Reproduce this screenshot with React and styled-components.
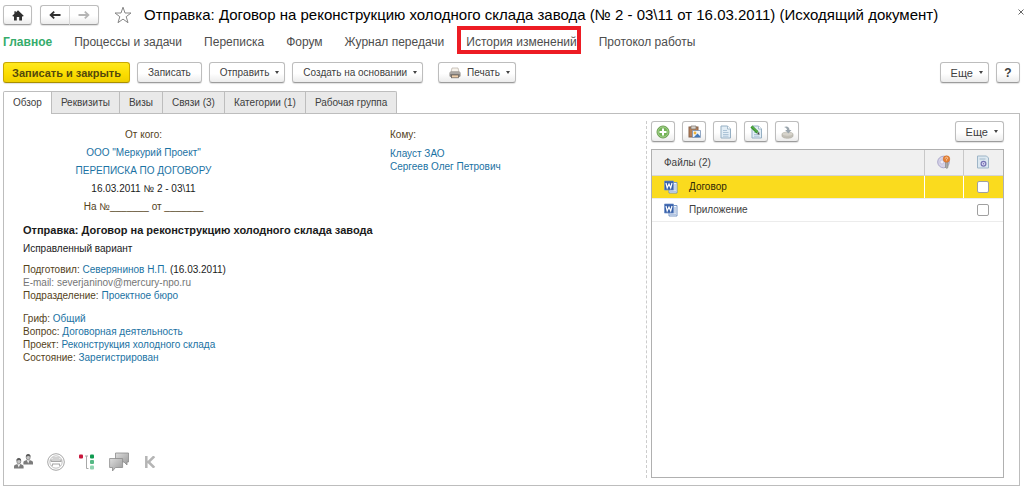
import React from 'react';
import styled, { createGlobalStyle } from 'styled-components';

const GlobalStyle = createGlobalStyle`
  * {
    box-sizing: border-box;
  }

  body {
    margin: 0;
    background: #fff;
    font-family: 'Liberation Sans', Arial, sans-serif;
    font-size: 10px;
    color: #404040;
  }
`;

const Page = styled.div`
  display: flex;
  flex-direction: column;
  min-height: 100vh;
  padding: 5px 4px 6px 3px;
`;

const TitleBar = styled.header`
  display: flex;
  align-items: center;
  height: 20px;
`;

const Button = styled.button`
  display: inline-flex;
  align-items: center;
  justify-content: center;
  gap: 6px;
  height: ${props => props.$height || 21}px;
  width: ${props => (props.$width ? `${props.$width}px` : 'auto')};
  padding: ${props => (props.$width ? '0' : '0 10px')};
  border: 1px solid #bdbdbd;
  border-bottom-color: #9c9c9c;
  border-radius: 3px;
  background: linear-gradient(#fff, #fff 55%, #ececec);
  box-shadow: 0 1px 1px rgba(0, 0, 0, 0.12);
  font-family: inherit;
  font-size: ${props => (props.$large ? 11 : 10)}px;
  color: #404040;
  white-space: nowrap;
`;

const PrimaryButton = styled(Button)`
  padding: 0 8px;
  border-color: #c9a800;
  border-bottom-color: #a98f00;
  background: linear-gradient(#ffe91f, #fbdc00 60%, #efd000);
  font-size: 11px;
  font-weight: bold;
  color: #54490c;
`;

const MenuButton = styled(Button)`
  padding: 0 5px 0 10px;

  &::after {
    content: '';
    border: 2px solid transparent;
    border-top: 3px solid #444;
    border-bottom: 0;
  }
`;

const HelpButton = styled(Button)`
  font-size: 12px;
  font-weight: bold;
`;

const HistoryGroup = styled.div`
  display: flex;
  margin: 0 15px 0 8px;

  button:first-child {
    border-right-color: #d9d9d9;
    border-radius: 3px 0 0 3px;
  }

  button:last-child {
    border-left: 0;
    border-radius: 0 3px 3px 0;
  }
`;

const StarButton = styled.button`
  display: flex;
  padding: 0;
  border: 0;
  background: none;
`;

const Title = styled.h1`
  flex: 1;
  margin: 0 0 0 12px;
  font-size: 15px;
  font-weight: normal;
  line-height: 20px;
  white-space: nowrap;
  color: #000;
`;

const CloseButton = styled.button`
  display: flex;
  align-self: flex-start;
  margin-right: -4px;
  padding: 4px 0;
  border: 0;
  background: none;
`;

const Nav = styled.nav`
  display: flex;
  gap: 22px;
  margin-top: 9px;
`;

const NavLink = styled.a`
  position: relative;
  font-size: 12px;
  line-height: 16px;
  font-weight: ${props => (props.$active ? 'bold' : 'normal')};
  color: ${props => (props.$active ? '#35ac6b' : '#4d4d4d')};
  text-decoration: none;
  white-space: nowrap;
`;

const MarkedLink = styled(NavLink)`
  &::after {
    content: '';
    position: absolute;
    inset: -8px -4px -4px -9px;
    border: 4px solid #ed1c24;
  }
`;

const CommandBar = styled.div`
  display: flex;
  gap: 7px;
  margin-top: 12px;
`;

const Spacer = styled.div`
  flex: ${props => (props.$width ? `0 0 ${props.$width}px` : '1')};
`;

const Tabs = styled.div`
  display: flex;
  margin-top: 8px;
`;

const Tab = styled.button`
  height: ${props => (props.$active ? 23 : 22)}px;
  margin-bottom: ${props => (props.$active ? '-1px' : '0')};
  padding: ${props => (props.$active ? '0 9px 1px' : '0 9px')};
  border: 1px solid #bdbdbd;
  border-left-width: ${props => (props.$active ? '1px' : '0')};
  border-bottom: 0;
  border-radius: ${props => (props.$active ? '2px 0 0 0' : '0')};
  background: ${props => (props.$active ? '#fff' : '#e9e9e9')};
  font-family: inherit;
  font-size: 10px;
  color: #404040;
  white-space: nowrap;
  z-index: ${props => (props.$active ? 1 : 0)};

  &:last-child {
    border-radius: 0 2px 0 0;
  }
`;

const Panel = styled.main`
  display: flex;
  flex: 1;
  border: 1px solid #bdbdbd;
  padding: 7px 15px 7px 0;
`;

const Overview = styled.section`
  display: flex;
  flex: 642;
  flex-direction: column;
  min-width: 0;
  border-right: 1px dashed #ccc;
`;

const Parties = styled.div`
  display: grid;
  grid-template-columns: 247px 1fr;
  column-gap: 123px;
  padding: 5px 0 0 16px;
  color: #54421a;
`;

const Sender = styled.div`
  text-align: center;
  line-height: 18px;
`;

const Recipient = styled.div`
  line-height: 13px;
`;

const RecipientLabel = styled.div`
  line-height: 18px;
  margin-bottom: 3px;
`;

const Dark = styled.span`
  color: #1a1a1a;
`;

const Muted = styled.span`
  color: #757575;
`;

const Link = styled.a`
  color: #1a72a3;
  text-decoration: none;
`;

const Body = styled.div`
  padding-left: 19px;
  color: #54421a;
  line-height: 13px;
`;

const Subject = styled.h2`
  margin: 8px 0 5px;
  font-size: 11px;
  line-height: 13px;
  color: #1a1a1a;
`;

const Group = styled.div`
  margin-top: ${props => props.$gap}px;
`;

const StatusIcons = styled.div`
  display: flex;
  align-items: center;
  gap: 13px;
  margin-top: auto;
  padding: 0 0 6px 10px;
`;

const Files = styled.section`
  display: flex;
  flex: 353;
  flex-direction: column;
  min-width: 0;
  padding-left: 4px;
`;

const FileBar = styled.div`
  display: flex;
  gap: 7px;
`;

const FileFrame = styled.div`
  flex: 1;
  margin-top: 7px;
  border: 1px solid #b0b0b0;
`;

const FileTable = styled.table`
  width: 100%;
  border-collapse: collapse;
  table-layout: fixed;
`;

const HeadCell = styled.th`
  width: ${props => (props.$width ? `${props.$width}px` : 'auto')};
  height: 25px;
  padding: 0 0 0 ${props => (props.$width ? 0 : 12)}px;
  border-left: ${props => (props.$width ? '1px solid #c8c8c8' : '0')};
  border-bottom: 1px solid #d5d5d5;
  background: #f0f0f0;
  font-weight: normal;
  text-align: ${props => (props.$width ? 'center' : 'left')};

  svg {
    display: block;
    margin: 0 auto;
  }
`;

const FileRow = styled.tr`
  background: ${props => (props.$selected ? '#fadb1e' : '#fff')};
  color: ${props => (props.$selected ? '#2e2806' : '#404040')};
`;

const Cell = styled.td`
  height: 23px;
  padding: 0 0 0 ${props => (props.$center ? 0 : 12)}px;
  border-bottom: 1px solid #ececec;
  border-left: ${props => (props.$center ? '1px solid #fff' : '0')};
`;

const FileName = styled.label`
  display: flex;
  align-items: center;
  gap: 11px;
`;

const CheckBox = styled.input`
  display: block;
  appearance: none;
  width: 12px;
  height: 12px;
  margin: 0 auto;
  border: 1px solid #a0a0a0;
  border-radius: 2px;
  background: #fff;
`;

const HomeIcon = () => (
  <svg width="12" height="11" viewBox="0 0 12 11">
    <path d="M6 0.3 11.7 5.8 10.8 6.7 10 6V10.6H7.2V7H4.8v3.6H2V6l-.8.7-.9-.9L2.4 3.7V1.2h1.4v1.2Z" fill="#2f2f2f" />
  </svg>
);

const ArrowIcon = ({ color, flip }) => (
  <svg width="12" height="10" viewBox="0 0 12 10">
    <path
      d="M11.5 5H2M5.2 1.6 1.6 5l3.6 3.4"
      fill="none"
      stroke={color}
      strokeWidth="1.8"
      transform={flip ? 'matrix(-1 0 0 1 12 0)' : undefined}
    />
  </svg>
);

const StarIcon = () => (
  <svg width="18" height="18" viewBox="0 0 18 18">
    <path d="M9 1.2 11 7h6l-4.8 3.7 1.8 6L9 13.1l-5 3.6 1.8-6L1 7h6Z" fill="#fff" stroke="#858585" strokeWidth="1" />
  </svg>
);

const PrinterIcon = () => (
  <svg width="12" height="12" viewBox="0 0 12 12">
    <path d="M3 1h6l1 4H2Z" fill="#f7f3ec" stroke="#b6aea4" strokeWidth=".7" />
    <rect x=".5" y="4.5" width="11" height="5.5" rx="1.5" fill="#8b8783" />
    <path d="M1 6h10" stroke="#c9c5c1" />
    <rect x="2.5" y="8" width="7" height="2.8" fill="#f0cfaa" stroke="#625c57" strokeWidth=".7" />
  </svg>
);

const AddIcon = () => (
  <svg width="14" height="14" viewBox="0 0 14 14">
    <circle cx="7" cy="7" r="6" fill="#73b356" stroke="#6a9d51" />
    <circle cx="7" cy="7" r="5" fill="none" stroke="#a5d28d" />
    <path d="M7 3.5v7M3.5 7h7" stroke="#fff" strokeWidth="2" />
  </svg>
);

const PasteIcon = () => (
  <svg width="13" height="14" viewBox="0 0 13 14">
    <rect x="1" y="2" width="9" height="10" fill="#b77f55" stroke="#87624b" />
    <path d="M3 1h5v3H3z" fill="#d9d3cb" stroke="#77706a" strokeWidth=".7" />
    <path d="M4.5 5.5h8v7h-8z" fill="#eef4fb" stroke="#7993b5" strokeWidth=".8" />
    <circle cx="7" cy="8" r="1.4" fill="#f2b53a" />
    <path d="m6 12 3.5-3.5L12 11v1Z" fill="#4278b8" />
  </svg>
);

const PageIcon = ({ children }) => (
  <svg width="13" height="14" viewBox="0 0 13 14">
    <path d="M2 1h6.5L11.5 4v9H2Z" fill="#e3eef6" stroke="#95afc3" />
    <path d="M8.5 1v3h3" fill="#fff" stroke="#95afc3" strokeWidth=".8" />
    <path d="M4 5.500h4M4 7.500h5.500M4 9.500h5.500M4 11.200h5.500" stroke="#9fb9cf" strokeWidth=".8" />
    {children}
  </svg>
);

const EditIcon = () => (
  <PageIcon>
    <path d="m1.500 1.500 6 6" stroke="#37942e" strokeWidth="3" />
    <path d="m7 9 2.500.8L9 7Z" fill="#46433a" />
    <path d="m1.500 1 6 6" stroke="#7cc661" strokeWidth=".8" />
  </PageIcon>
);

const DiskIcon = () => (
  <svg width="13" height="14" viewBox="0 0 13 14">
    <path d="M1 9c0-2.500 11-2.500 11 0v2c0 3-11 3-11 0Z" fill="#c2bfb6" stroke="#b3b0a7" strokeWidth=".7" />
    <ellipse cx="6.500" cy="9" rx="5" ry="1.700" fill="#d6d3cb" />
    <path d="M3 2c3-1.500 5.500 0 5.500 3H10.500L7.300 8.500 4.200 5H6c0-1.500-1-2.500-3-3Z" fill="#9aa5ad" />
  </svg>
);

const WordIcon = () => (
  <svg width="14" height="14" viewBox="0 0 14 14">
    <path d="M5 2.500h8v10.500H5z" fill="#f3f7fc" stroke="#6b8dc0" strokeWidth=".9" />
    <path d="M10 5h2M10 7h2M10 9h2M6 11.200h6" stroke="#7f9ccb" strokeWidth=".8" />
    <path d="M.5 1h9v9h-9z" fill="#365fa8" stroke="#6f91ca" strokeWidth=".7" />
    <path d="m2 3 1.200 5L5 4l1.700 4L8 3" fill="none" stroke="#fff" strokeWidth="1.200" />
  </svg>
);

const KeyIcon = () => (
  <svg width="14" height="14" viewBox="0 0 14 14">
    <circle cx="6.500" cy="7" r="5.800" fill="#d6d3e8" stroke="#aaa6ca" />
    <circle cx="5" cy="7" r="2" fill="#efedf8" stroke="#bdb9d8" strokeWidth=".7" />
    <path d="M8.500 6h2.500v6.500l-1.200 1-1.300-1Z" fill="#a9aaa9" stroke="#737571" strokeWidth=".5" />
    <circle cx="9.500" cy="4" r="3.300" fill="#e58136" stroke="#cd6b27" strokeWidth=".5" />
    <path d="M8.300 3.500c0-2 3-1.500 2.300 0L9.500 4.500v1" fill="none" stroke="#f9dcbc" strokeWidth=".8" />
  </svg>
);

const SignedIcon = () => (
  <svg width="12" height="14" viewBox="0 0 12 14">
    <path d="M.5 1h9L11.500 3v10H.5Z" fill="#dce8f1" stroke="#9eb5c7" />
    <path d="M2.500 4h6" stroke="#a2b8ca" />
    <circle cx="6.500" cy="8.700" r="2.400" fill="#dad8f1" stroke="#7674b3" strokeWidth="1.200" />
    <circle cx="6.500" cy="8.700" r=".7" fill="#7674b3" />
  </svg>
);

const Person = ({ x, y }) => (
  <g transform={`translate(${x} ${y})`}>
    <path d="M0 11.500V9.500C0 8 1.500 7.600 3.300 7h3c1.800.6 3.300 1 3.300 2.500v2Z" fill="#7c7c7c" />
    <path d="m3.300 7 1.500 3.500L6.300 7Z" fill="#f2f2f2" />
    <ellipse cx="4.800" cy="4.200" rx="2" ry="2.800" fill="#c4c4c4" stroke="#7a7a7a" strokeWidth=".7" />
    <path d="M2.500 3.700C2 0 7.600 0 7.100 3.700 5.500 2.500 4.200 3 2.500 3.700Z" fill="#5c5c5c" />
  </g>
);

const PeopleIcon = () => (
  <svg width="20" height="18" viewBox="0 0 20 18">
    <Person x={9.4} y={0} />
    <Person x={0} y={4} />
  </svg>
);

const SealIcon = () => (
  <svg width="18" height="18" viewBox="0 0 18 18" fill="none" stroke="#a6a6a6">
    <circle cx="9" cy="9" r="8.300" />
    <circle cx="9" cy="9" r="6.200" strokeWidth=".7" />
    <path d="M5.500 5h7M4 8.500V7h10v1.500H4M6 11h6M5 13l1-2.500M13 13l-1-2.500" strokeWidth="1.100" />
  </svg>
);

const TreeIcon = () => (
  <svg width="18" height="18" viewBox="0 0 18 18">
    <rect x="1" y="1.500" width="4" height="4" rx="1" fill="#c9163c" />
    <path d="M7 3H10M8.500 3v12.500H10.500" fill="none" stroke="#a8a8a8" />
    <rect x="12" y="1.500" width="4" height="4" rx="1" fill="#0f9a50" />
    <rect x="12" y="7" width="4" height="4" rx="1" fill="#56b985" />
    <rect x="12" y="12.500" width="4" height="4" rx="1" fill="#8fd3af" />
  </svg>
);

const ChatIcon = () => (
  <svg width="20" height="20" viewBox="0 0 20 20">
    <defs>
      <linearGradient id="bubble" x1="0" y1="0" x2="1" y2="1">
        <stop offset="0" stopColor="#dedede" />
        <stop offset="1" stopColor="#989898" />
      </linearGradient>
    </defs>
    <path d="M6.500 1h13v9h-1.500v3l-3-3H6.500Z" fill="url(#bubble)" stroke="#8c8c8c" strokeWidth=".8" />
    <path d="M.6 6.500h13v9H6.500L3.500 19v-3.500H.6Z" fill="url(#bubble)" stroke="#8c8c8c" strokeWidth=".8" />
  </svg>
);

const LetterKIcon = () => (
  <svg width="14" height="12" viewBox="0 0 14 12">
    <path d="M4.300 0v12M12.300.3 6.500 6l5.800 5.700M4.500 6h2.500" fill="none" stroke="#b5b5b5" strokeWidth="2.500" />
  </svg>
);

const tabs = ['Обзор', 'Реквизиты', 'Визы', 'Связи (3)', 'Категории (1)', 'Рабочая группа'];

const files = [
  { id: 'file-1', name: 'Договор', selected: true },
  { id: 'file-2', name: 'Приложение', selected: false }
];

const App = () => {
  return (
    <Page>
      <GlobalStyle />
      <TitleBar>
        <Button $width={29} $height={20} aria-label="Домой"><HomeIcon /></Button>
        <HistoryGroup>
          <Button $width={30} $height={20} aria-label="Назад"><ArrowIcon color="#2f2f2f" /></Button>
          <Button $width={29} $height={20} aria-label="Вперед"><ArrowIcon color="#b5b5b5" flip /></Button>
        </HistoryGroup>
        <StarButton aria-label="В избранное"><StarIcon /></StarButton>
        <Title>Отправка: Договор на реконструкцию холодного склада завода (№ 2 - 03\11 от 16.03.2011) (Исходящий документ)</Title>
        <CloseButton aria-label="Закрыть">
          <svg width="6" height="6" viewBox="0 0 6 6">
            <path d="m.5.5 5 5m0-5-5 5" stroke="#666" />
          </svg>
        </CloseButton>
      </TitleBar>

      <Nav>
        <NavLink href="#" $active>Главное</NavLink>
        <NavLink href="#">Процессы и задачи</NavLink>
        <NavLink href="#">Переписка</NavLink>
        <NavLink href="#">Форум</NavLink>
        <NavLink href="#">Журнал передачи</NavLink>
        <MarkedLink href="#">История изменений</MarkedLink>
        <NavLink href="#">Протокол работы</NavLink>
      </Nav>

      <CommandBar>
        <PrimaryButton>Записать и закрыть</PrimaryButton>
        <Button>Записать</Button>
        <MenuButton>Отправить</MenuButton>
        <MenuButton>Создать на основании</MenuButton>
        <Spacer $width={1} />
        <MenuButton><PrinterIcon />Печать</MenuButton>
        <Spacer />
        <MenuButton $large>Еще</MenuButton>
        <HelpButton $width={24}>?</HelpButton>
      </CommandBar>

      <Tabs role="tablist">
        {tabs.map((tab, index) => (
          <Tab key={tab} role="tab" aria-selected={index === 0} $active={index === 0}>{tab}</Tab>
        ))}
      </Tabs>

      <Panel>
        <Overview>
          <Parties>
            <Sender>
              <div>От кого:</div>
              <div><Link href="#">ООО "Меркурий Проект"</Link></div>
              <div><Link href="#">ПЕРЕПИСКА ПО ДОГОВОРУ</Link></div>
              <div><Dark>16.03.2011 № 2 - 03\11</Dark></div>
              <div>На №_______ от _______</div>
            </Sender>
            <Recipient>
              <RecipientLabel>Кому:</RecipientLabel>
              <div><Link href="#">Клауст ЗАО</Link></div>
              <div><Link href="#">Сергеев Олег Петрович</Link></div>
            </Recipient>
          </Parties>
          <Body>
            <Subject>Отправка: Договор на реконструкцию холодного склада завода</Subject>
            <Dark>Исправленный вариант</Dark>
            <Group $gap={8}>
              <div>Подготовил: <Link href="#">Северянинов Н.П.</Link> <Dark>(16.03.2011)</Dark></div>
              <div><Muted>E-mail: severjaninov@mercury-npo.ru</Muted></div>
              <div>Подразделение: <Link href="#">Проектное бюро</Link></div>
            </Group>
            <Group $gap={10}>
              <div>Гриф: <Link href="#">Общий</Link></div>
              <div>Вопрос: <Link href="#">Договорная деятельность</Link></div>
              <div>Проект: <Link href="#">Реконструкция холодного склада</Link></div>
              <div>Состояние: <Link href="#">Зарегистрирован</Link></div>
            </Group>
          </Body>
          <StatusIcons>
            <PeopleIcon />
            <SealIcon />
            <TreeIcon />
            <ChatIcon />
            <LetterKIcon />
          </StatusIcons>
        </Overview>

        <Files>
          <FileBar>
            <Button $width={24} aria-label="Добавить"><AddIcon /></Button>
            <Button $width={24} aria-label="Вставить"><PasteIcon /></Button>
            <Button $width={24} aria-label="Открыть"><PageIcon /></Button>
            <Button $width={24} aria-label="Изменить"><EditIcon /></Button>
            <Button $width={24} aria-label="Сохранить"><DiskIcon /></Button>
            <Spacer />
            <MenuButton $large>Еще</MenuButton>
          </FileBar>
          <FileFrame>
            <FileTable>
              <thead>
                <tr>
                  <HeadCell>Файлы (2)</HeadCell>
                  <HeadCell $width={39}><KeyIcon /></HeadCell>
                  <HeadCell $width={40}><SignedIcon /></HeadCell>
                </tr>
              </thead>
              <tbody>
                {files.map(file => (
                  <FileRow key={file.id} $selected={file.selected}>
                    <Cell>
                      <FileName htmlFor={file.id}><WordIcon />{file.name}</FileName>
                    </Cell>
                    <Cell $center />
                    <Cell $center><CheckBox type="checkbox" id={file.id} /></Cell>
                  </FileRow>
                ))}
              </tbody>
            </FileTable>
          </FileFrame>
        </Files>
      </Panel>
    </Page>
  );
};

export default App;
